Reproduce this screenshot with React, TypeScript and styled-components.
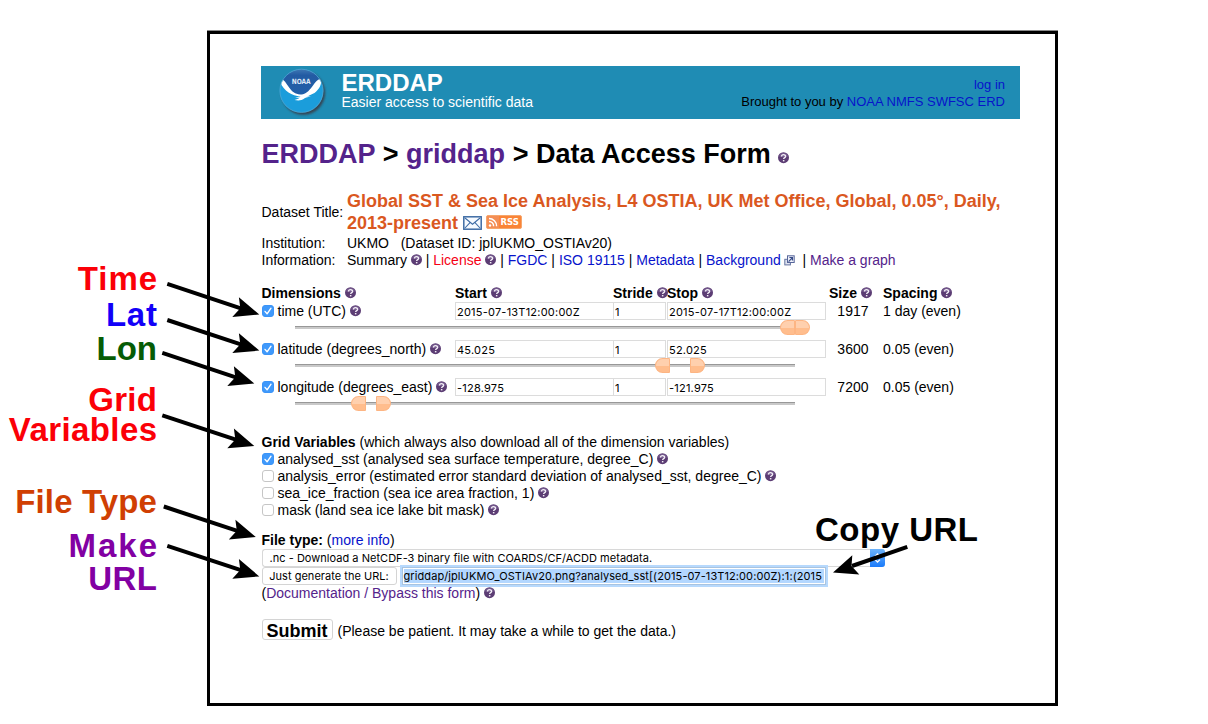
import React from "react";
import styled, { createGlobalStyle } from "styled-components";

const SANS = '"Liberation Sans", Arial, sans-serif';
const UI = 'Inter, "Liberation Sans", sans-serif';

const Global = createGlobalStyle`
  *, *::before, *::after { box-sizing: border-box; }
  html, body { margin: 0; padding: 0; background: #fff; }
  body { width: 1208px; height: 724px; overflow: hidden; }
`;

const Page = styled.div`
  position: relative;
  width: 1208px;
  height: 724px;
  padding: 31px 0 0 207px;
  background: #fff;
  color: #000;
  font: 14px/17px ${SANS};
`;

const Frame = styled.main`
  width: 851px;
  height: 675px;
  padding: 32px 34px 0 51.5px;
  border: 3px solid #000;
  box-shadow: 0 -1px 0 #8a8a8a;
`;

const Banner = styled.header`
  display: flex;
  width: 759px;
  height: 53px;
  margin-left: -0.5px;
  padding: 0 15px 0 16px;
  background: #1f8cb4;
`;

const Brand = styled.div`
  display: flex;
  flex-direction: column;
  margin-left: 13.5px;
  padding-top: 3px;
  color: #fff;
`;

const BrandName = styled.strong`
  font-size: 24px;
  line-height: 28px;
  height: 25px;
`;

const BrandMeta = styled.div`
  display: flex;
  flex-direction: column;
  align-items: flex-end;
  margin-left: auto;
  padding-top: 10px;
  font-size: 13px;
`;

const Link = styled.a<{ $kind?: "visited" | "alert" }>`
  color: ${(p) => (p.$kind === "visited" ? "#54238b" : p.$kind === "alert" ? "#f50014" : "#0713cb")};
  text-decoration: none;
`;

const Title = styled.h1`
  margin: 19px 0 0;
  font-size: 27px;
  line-height: 32px;
  height: 51px;
  letter-spacing: 0.02px;
  white-space: nowrap;
`;

const Info = styled.section`
  display: grid;
  grid-template-columns: 85.5px 1fr;
  grid-template-rows: 46px 17px 17px;
  white-space: nowrap;
`;

const InfoLabel = styled.div<{ $offset?: number }>`
  padding-top: ${(p) => p.$offset || 0}px;
`;

const DatasetTitle = styled.h2`
  margin: 0;
  padding-top: 1px;
  font-size: 18px;
  line-height: 22px;
  color: #da581f;
`;

const Dimensions = styled.section`
  margin-top: 16px;
`;

const DimGrid = styled.div<{ $head?: boolean }>`
  display: grid;
  grid-template-columns: 193.5px 158px 54px 162px 54px 1fr;
  height: ${(p) => (p.$head ? 17 : 18)}px;
  font-weight: ${(p) => (p.$head ? "bold" : "normal")};
  white-space: nowrap;
`;

const DimName = styled.div`
  display: flex;
  padding-top: 1px;
`;

const DimText = styled.div<{ $right?: boolean }>`
  padding-top: 1px;
  padding-right: ${(p) => (p.$right ? 14.5 : 0)}px;
  text-align: ${(p) => (p.$right ? "right" : "left")};
`;

const Field = styled.input<{ $w: number }>`
  width: ${(p) => p.$w}px;
  height: 18px;
  margin: 0;
  padding: 1px 1px 0;
  border: 1px solid #dcdcdc;
  border-radius: 0;
  outline: none;
  background: #fff;
  color: #000;
  font: 11px/14px ${UI};
  letter-spacing: 0.22px;
`;

const SliderRow = styled.div`
  position: relative;
  height: 20px;
  padding: 6px 0 0 33px;
`;

const Track = styled.div`
  width: 500px;
  height: 3px;
  background: linear-gradient(#989898 0 1px, #c9c9c9 1px 3px);
`;

const Thumb = styled.i<{ $side: "start" | "stop"; $x: number }>`
  position: absolute;
  top: 0;
  left: ${(p) => p.$x}px;
  width: 15px;
  height: 15px;
  border: 1px solid #fdb583;
  border-radius: ${(p) => (p.$side === "start" ? "8px 1px 1px 8px" : "1px 8px 8px 1px")};
  background: linear-gradient(#ffd0ae 0 55%, #ffbd8d 55%);
`;

const Box = styled.span<{ $on: boolean }>`
  flex: none;
  display: inline-flex;
  width: 12px;
  height: 12px;
  margin: 2px 4px 0 0;
  align-items: center;
  justify-content: center;
  border: 1px solid ${(p) => (p.$on ? "#3b94f8" : "#c6c6c6")};
  border-radius: 3px;
  background: ${(p) => (p.$on ? "#3f99fb" : "#fff")};
`;

const Section = styled.section<{ $top: number }>`
  margin-top: ${(p) => p.$top}px;
  white-space: nowrap;
`;

const Line = styled.div`
  display: flex;
  height: 17px;
  white-space: pre;
`;

const Select = styled.div`
  display: flex;
  width: 623px;
  height: 18px;
  align-items: center;
  justify-content: space-between;
  padding-left: 7px;
  border: 1px solid #d8d8d8;
  border-right: 0;
  border-radius: 3px;
  font: 11px/16px ${UI};
`;

const SelectKnob = styled.span`
  display: flex;
  width: 15px;
  height: 18px;
  align-items: center;
  justify-content: center;
  border-radius: 0 3px 3px 0;
  background: linear-gradient(#6db3fa, #1a7bfb);
`;

const UrlRow = styled.div`
  display: flex;
  height: 18px;
`;

const SmallButton = styled.button`
  width: 135px;
  height: 18px;
  padding: 0;
  border: 1px solid #d4d4d4;
  border-radius: 3px;
  background: #fff;
  color: #000;
  font: 11px/16px ${UI};
  letter-spacing: 0.03px;
`;

const UrlField = styled.div`
  width: 424px;
  height: 18px;
  margin-left: 5px;
  padding: 1px 1px;
  border: 1px solid #a9c4e0;
  background: #fff;
  box-shadow: 0 0 0 2px #b7d9fd, inset 0 0 0 1px #fff;
  font: 11px/15px ${UI};
  overflow: hidden;
`;

const Selection = styled.span`
  display: block;
  height: 14px;
  background: #b3d7ff;
`;

const Spaced = styled.span<{ $ls: number }>`
  letter-spacing: ${(p) => p.$ls}px;
  white-space: pre;
`;

const SubmitRow = styled.div`
  display: flex;
  margin-top: 17px;
`;

const SubmitButton = styled.button`
  width: 71px;
  height: 21px;
  padding: 1px 0 0;
  border: 1px solid #d4d4d4;
  border-radius: 3px;
  background: #fff;
  color: #000;
  font: bold 18px/20px ${SANS};
`;

const SubmitNote = styled.span`
  margin-left: 5px;
  padding-top: 4px;
  white-space: nowrap;
`;

const Callout = styled.div<{ $right: number; $y: number; $c: string; $lh?: number }>`
  position: absolute;
  display: flex;
  flex-direction: column;
  align-items: flex-end;
  right: ${(p) => 1208 - p.$right}px;
  top: ${(p) => p.$y}px;
  color: ${(p) => p.$c};
  font: bold 33px/${(p) => p.$lh || 30}px ${SANS};
  white-space: pre;
`;

const Word = styled.span<{ $ls: number }>`
  letter-spacing: ${(p) => p.$ls}px;
  margin-right: ${(p) => -p.$ls}px;
`;

const Overlay = styled.svg`
  position: absolute;
  inset: 0;
  pointer-events: none;
`;

const Icon = styled.svg<{ $drop?: number; $ml?: number }>`
  display: inline-block;
  flex: none;
  vertical-align: ${(p) => p.$drop || 0}px;
  margin-left: ${(p) => p.$ml || 0}px;
`;

const Help = () => (
  <Icon width="11" height="12" viewBox="0 0 11 12" $drop={-1}>
    <circle cx="5.5" cy="5.7" r="5.5" fill="#5c3d74" />
    <path d="M1 4.2A4.8 4.8 0 0 1 10 4.2Q5.5 6 1 4.2Z" fill="#8d74a6" opacity=".55" />
    <path d="M3.5 4.6C3.5 2.1 7.6 2.1 7.6 4.4C7.6 5.7 5.6 5.6 5.6 7.1" fill="none" stroke="#f3eef6" strokeWidth="1.3" />
    <rect x="4.9" y="8" width="1.5" height="1.4" fill="#f3eef6" />
  </Icon>
);

const Check = ({ on }: { on: boolean }) => (
  <Box $on={on}>
    {on && (
      <svg width="10" height="10" viewBox="0 0 10 10">
        <path d="M2 5.4L4.1 7.8L8 2.2" fill="none" stroke="#fff" strokeWidth="1.4" strokeLinecap="round" strokeLinejoin="round" />
      </svg>
    )}
  </Box>
);

const Logo = () => (
  <svg width="51" height="53" viewBox="0 0 51 53">
    <defs>
      <clipPath id="disc"><circle cx="24.5" cy="24.8" r="21.8" /></clipPath>
      <filter id="soft" x="-20%" y="-20%" width="140%" height="140%"><feGaussianBlur stdDeviation="1.2" /></filter>
      <linearGradient id="navy" x1="0" y1="0" x2="0" y2="1">
        <stop offset="0" stopColor="#4d86bd" /><stop offset=".3" stopColor="#235ba3" /><stop offset="1" stopColor="#2260aa" />
      </linearGradient>
    </defs>
    <circle cx="26.3" cy="27" r="21.8" fill="#344552" filter="url(#soft)" />
    <g clipPath="url(#disc)">
      <rect width="51" height="53" fill="#1b9ddb" />
      <path d="M0 0H51V14L43 15L30 29L24 31L17 28L5 13L0 12Z" fill="url(#navy)" />
      <path d="M3 13C7.500 13 9 17.500 12.500 22C16 27 20 28.500 25 28.500C30 27.500 33 23.500 36 19.500C38.500 16 40.500 13 44 13C45 18 42.500 23 37.500 27C34 29 30 30 28 32C24 35 21 34.500 17.500 34C21 33 23 32 23.500 30.500C15 30 7 25 3 16Z" fill="#fff" />
      <path d="M18 31.500Q25 29.500 34 30.500Q27 32.500 18 31.500Z" fill="#fff" />
    </g>
    <circle cx="24.5" cy="24.8" r="21.6" fill="none" stroke="#4fa6d2" strokeWidth=".8" />
    <text x="24.2" y="17.500" textAnchor="middle" textLength="19" lengthAdjust="spacingAndGlyphs" fontFamily="DejaVu Sans" fontSize="7.200" fontWeight="bold" fill="#dbe6f5">NOAA</text>
  </svg>
);

const Mail = () => (
  <Icon width="19" height="14" viewBox="0 0 19 14" $drop={-1}>
    <rect x=".8" y=".8" width="17.400" height="12.400" fill="#f6faff" stroke="#3e6ca5" strokeWidth="1.500" />
    <path d="M2 2L9.500 8.200L17 2M2 12L7 6.600M17 12L12 6.600" fill="none" stroke="#3e6ca5" strokeWidth="1.100" />
  </Icon>
);

const Rss = () => (
  <Icon width="36" height="14" viewBox="0 0 36 14" $ml={4}>
    <rect x=".5" y=".5" width="35" height="13" rx="1.500" fill="#fa8437" stroke="#f6a66c" />
    <rect x="1" y="1" width="12" height="12" fill="#f48e55" />
    <circle cx="4" cy="10.500" r="1.200" fill="#fff" />
    <path d="M3 6.500A4.500 4.500 0 0 1 7.600 11.200M3 3.500A7.600 7.600 0 0 1 10.600 11.200" fill="none" stroke="#fff" strokeWidth="1.400" />
    <text x="14.500" y="10.400" textLength="18.500" lengthAdjust="spacingAndGlyphs" fontFamily="DejaVu Sans" fontWeight="bold" fontSize="9.500" fill="#fff">RSS</text>
  </Icon>
);

const External = () => (
  <Icon width="11" height="11" viewBox="0 0 11 11" $ml={3} $drop={-1}>
    <rect x=".8" y="4.300" width="5.600" height="5.600" fill="#dfe3f0" stroke="#6474a0" />
    <rect x="3.500" y=".8" width="6.700" height="6.700" fill="#eef0fa" stroke="#56659a" />
    <path d="M4.600 6.600L8.200 2.800M5.400 2.500H8.500V5.600" fill="none" stroke="#354a86" strokeWidth="1.200" />
  </Icon>
);

const ARROWS = [
  [167.3, 283.9],
  [167.3, 320],
  [162.3, 352.9],
  [162.3, 415.3],
  [163.8, 506.5],
  [167.3, 545.8],
];

const DIMS = [
  { name: "time (UTC)", start: "2015-07-13T12:00:00Z", stop: "2015-07-17T12:00:00Z", size: "1917", spacing: "1 day (even)", a: 518, b: 533 },
  { name: "latitude (degrees_north)", start: "45.025", stop: "52.025", size: "3600", spacing: "0.05 (even)", a: 393, b: 428 },
  { name: "longitude (degrees_east)", start: "-128.975", stop: "-121.975", size: "7200", spacing: "0.05 (even)", a: 89, b: 114 },
];

const VARS = [
  { text: "analysed_sst (analysed sea surface temperature, degree_C)", on: true },
  { text: "analysis_error (estimated error standard deviation of analysed_sst, degree_C)", on: false },
  { text: "sea_ice_fraction (sea ice area fraction, 1)", on: false },
  { text: "mask (land sea ice lake bit mask)", on: false },
];

export default function App() {
  return (
    <Page>
      <Global />
      <Frame>
        <Banner>
          <Logo />
          <Brand>
            <BrandName>ERDDAP</BrandName>
            <span>Easier access to scientific data</span>
          </Brand>
          <BrandMeta>
            <Link>log in</Link>
            <span>Brought to you by <Link>NOAA NMFS SWFSC ERD</Link></span>
          </BrandMeta>
        </Banner>

        <Title>
          <Link $kind="visited">ERDDAP</Link> &gt; <Link $kind="visited">griddap</Link> &gt; Data Access Form <Help />
        </Title>

        <Info>
          <InfoLabel $offset={15}>Dataset Title:</InfoLabel>
          <DatasetTitle>
            Global SST &amp; Sea Ice Analysis, L4 OSTIA, UK Met Office, Global, 0.05°, Daily,
            <br />
            2013-present <Mail /><Rss />
          </DatasetTitle>
          <InfoLabel>Institution:</InfoLabel>
          <div>UKMO &nbsp; (Dataset ID: jplUKMO_OSTIAv20)</div>
          <InfoLabel>Information:</InfoLabel>
          <div>
            Summary <Help /> | <Link $kind="alert">License</Link> <Help /> | <Link>FGDC</Link> | <Link>ISO 19115</Link> |{" "}
            <Link>Metadata</Link> | <Link>Background</Link><External /> &nbsp;| <Link $kind="visited">Make a graph</Link>
          </div>
        </Info>

        <Dimensions>
          <DimGrid $head>
            <div>Dimensions <Help /></div>
            <div>Start <Help /></div>
            <div>Stride <Help /></div>
            <div>Stop <Help /></div>
            <div>Size <Help /></div>
            <div>Spacing <Help /></div>
          </DimGrid>
          {DIMS.map((d) => (
            <React.Fragment key={d.name}>
              <DimGrid>
                <DimName><Check on /><span>{d.name} <Help /></span></DimName>
                <Field $w={159} readOnly value={d.start} />
                <Field $w={53} readOnly value="1" />
                <Field $w={159} readOnly value={d.stop} />
                <DimText $right>{d.size}</DimText>
                <DimText>{d.spacing}</DimText>
              </DimGrid>
              <SliderRow>
                <Track />
                <Thumb $side="start" $x={d.a} />
                <Thumb $side="stop" $x={d.b} />
              </SliderRow>
            </React.Fragment>
          ))}
        </Dimensions>

        <Section $top={18}>
          <Line><b>Grid Variables</b> (which always also download all of the dimension variables)</Line>
          {VARS.map((v) => (
            <Line key={v.text}><Check on={v.on} /><span>{v.text} <Help /></span></Line>
          ))}
        </Section>

        <Section $top={13}>
          <Line><b>File type:</b> (<Link>more info</Link>)</Line>
          <Select>
            <Spaced $ls={0.03}>.nc - Download a NetCDF-3 binary file with COARDS/CF/ACDD metadata.</Spaced>
            <SelectKnob>
              <svg width="9" height="12" viewBox="0 0 9 12">
                <path d="M2 4.400L4.500 2L7 4.400M2 7.600L4.500 10L7 7.600" fill="none" stroke="#fff" strokeWidth="1.300" />
              </svg>
            </SelectKnob>
          </Select>
          <UrlRow>
            <SmallButton>Just generate the URL:</SmallButton>
            <UrlField>
              <Selection><Spaced $ls={0.09}>griddap/jplUKMO_OSTIAv20.png?analysed_sst[(2015-07-13T12:00:00Z):1:(2015</Spaced></Selection>
            </UrlField>
          </UrlRow>
          <Line><span>(<Link $kind="visited">Documentation / Bypass this form</Link>) <Help /></span></Line>
          <SubmitRow>
            <SubmitButton>Submit</SubmitButton>
            <SubmitNote>(Please be patient. It may take a while to get the data.)</SubmitNote>
          </SubmitRow>
        </Section>
      </Frame>

      <Callout $right={157} $y={264} $c="#fb0007"><Word $ls={0.9}>Time</Word></Callout>
      <Callout $right={157} $y={300} $c="#1200f8"><Word $ls={0.8}>Lat</Word></Callout>
      <Callout $right={157} $y={334} $c="#065c05"><Word $ls={0}>Lon</Word></Callout>
      <Callout $right={157} $y={385} $c="#fb0007">
        <Word $ls={0.3}>Grid</Word>
        <Word $ls={0.4}>Variables</Word>
      </Callout>
      <Callout $right={157} $y={487} $c="#d03f03"><Word $ls={0.15}>File Type</Word></Callout>
      <Callout $right={157} $y={529} $c="#8200a3" $lh={33}>
        <Word $ls={2}>Make</Word>
        <Word $ls={0.5}>URL</Word>
      </Callout>
      <Callout $right={978} $y={515} $c="#000"><Word $ls={0.5}>Copy URL</Word></Callout>

      <Overlay width="1208" height="724" viewBox="0 0 1208 724">
        {ARROWS.map(([x, y]) => (
          <g key={`${x}-${y}`} transform={`translate(${x} ${y})`}>
            <path d="M0 0L75 24.900" stroke="#000" strokeWidth="4" />
            <path d="M92 30.600L71.600 13.300L73 24.300L65 33Z" />
          </g>
        ))}
        <path d="M907.300 546.900L852 566" stroke="#000" strokeWidth="4" />
        <path d="M833 572.500L852.300 555.200L851.500 566L859.300 574.400Z" />
      </Overlay>
    </Page>
  );
}
